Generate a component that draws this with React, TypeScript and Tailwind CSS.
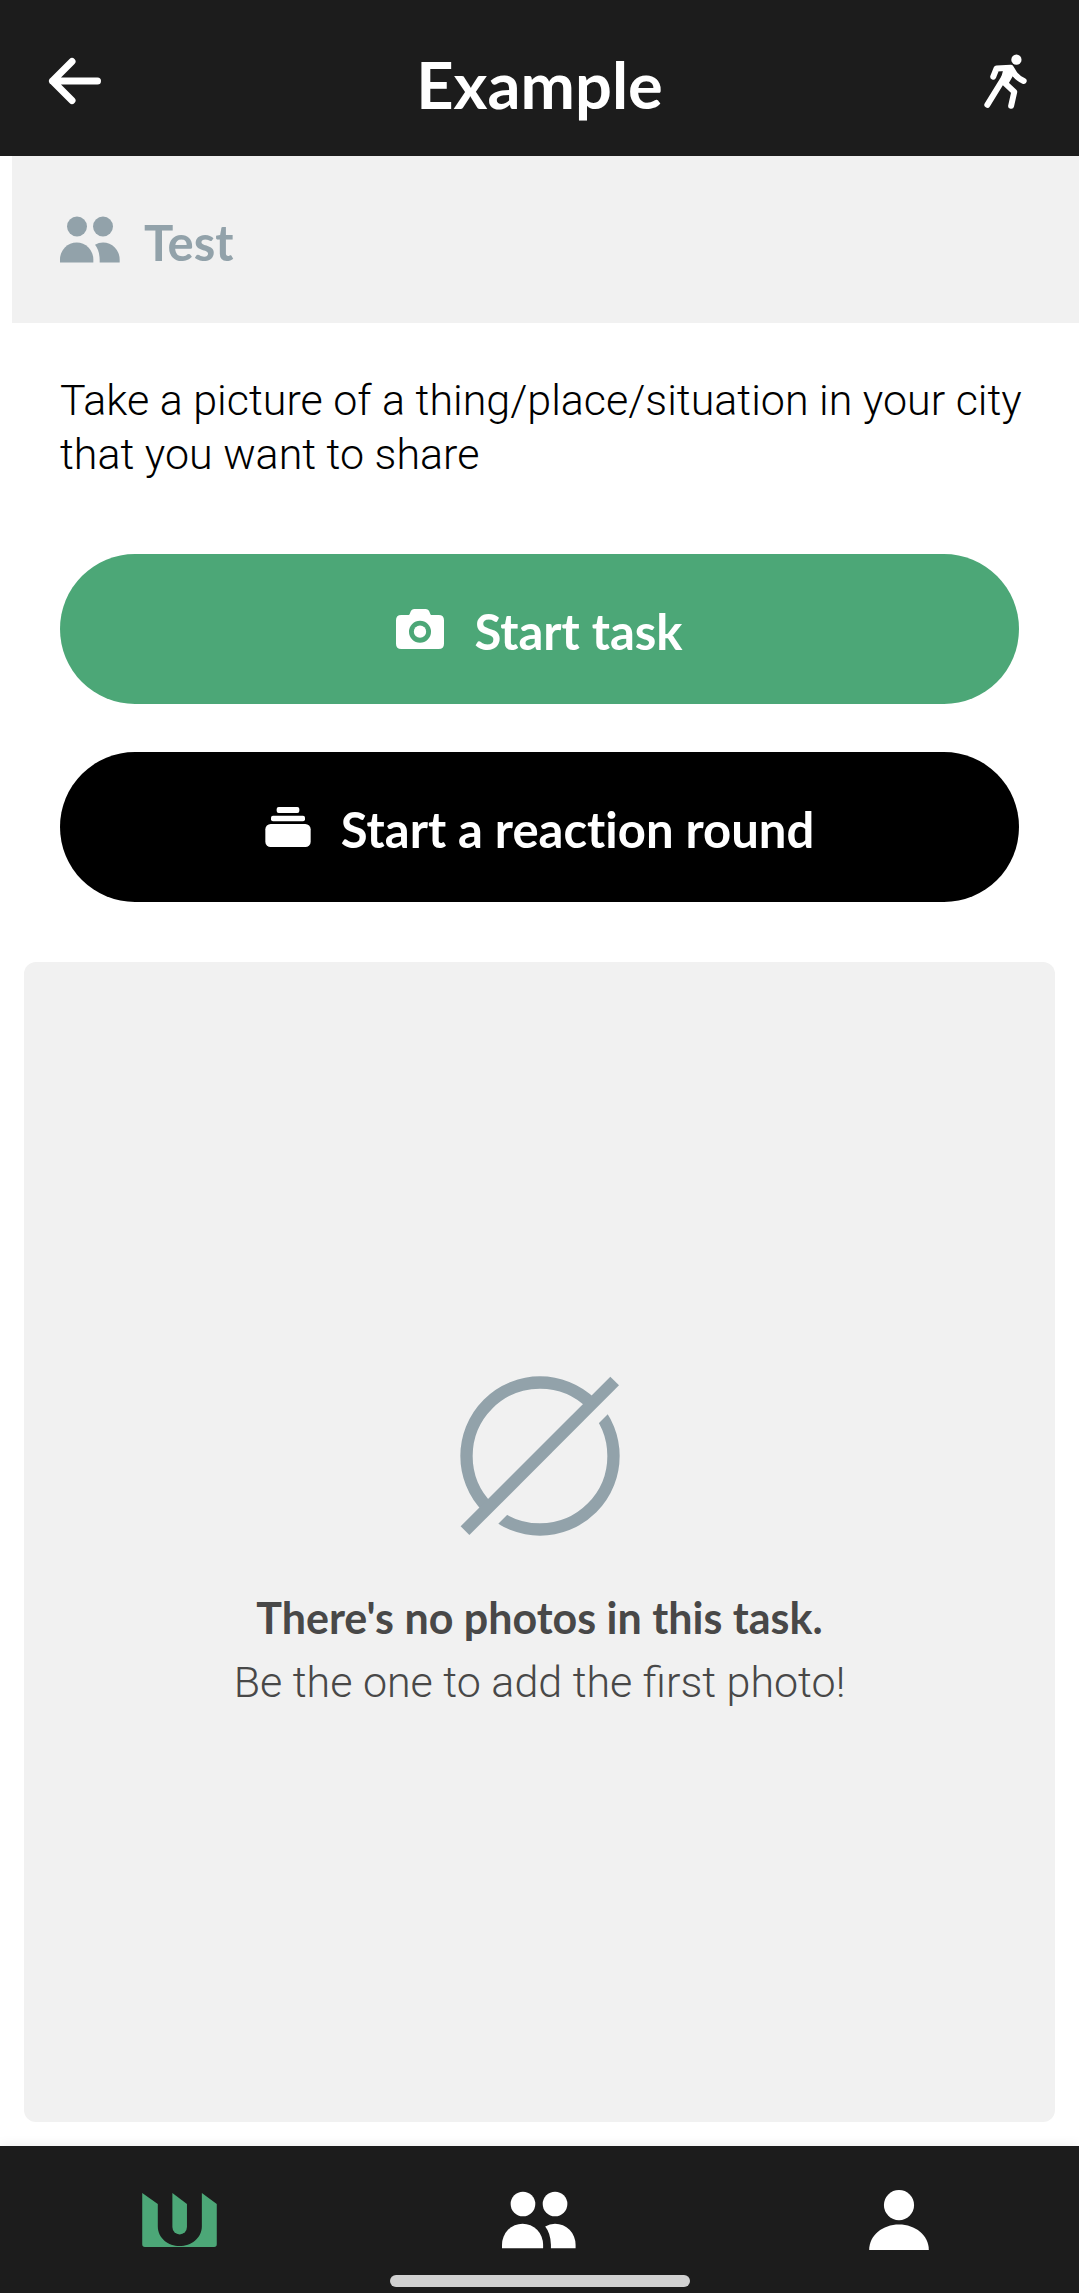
type IconProps = { className?: string };

function BackIcon() {
  return (
    <svg viewBox="0 0 54 48" className="h-12 w-[54px]" fill="none" stroke="currentColor" strokeWidth="7" strokeLinecap="round" strokeLinejoin="round" aria-hidden="true">
      <path d="M49.500 24H4.500M24 4.500L4.500 24l19.500 19.500" />
    </svg>
  );
}

function RunnerIcon() {
  return (
    <svg viewBox="130 100 130 165" className="h-[55px] w-[43px]" fill="none" stroke="currentColor" strokeWidth="18" strokeLinecap="round" strokeLinejoin="round" aria-hidden="true">
      <circle cx="228" cy="116.500" r="15.500" fill="currentColor" stroke="none" />
      <path d="M158 168L168 143L211 141L224 162Q233 173 250 181" />
      <path d="M140 253L196 162" />
      <path d="M194 188L221.500 214L212 256" />
      <path d="M190 142H212L216 158L200 186L184 182L192 152Z" fill="currentColor" strokeWidth="10" />
    </svg>
  );
}

function PeopleIcon({ className }: IconProps) {
  return (
    <svg viewBox="180 650 180 140" className={className} fill="currentColor" aria-hidden="true">
      <circle cx="231" cy="681" r="30" />
      <circle cx="309" cy="681" r="30" />
      <path d="M180 789v-9a50 51 0 0 1 100 0v9z" />
      <path d="M285 736Q296 729 309 729A50 51 0 0 1 359 780V789H299V780Q298 752 285 736z" />
    </svg>
  );
}

function PersonIcon() {
  return (
    <svg viewBox="150 269 180 181" className="h-[60px] w-[60px]" fill="currentColor" aria-hidden="true">
      <circle cx="240" cy="314.500" r="45.500" />
      <path d="M150 450C150 405 191 373 240 373S330 405 330 450Z" />
    </svg>
  );
}

function CameraIcon() {
  return (
    <svg viewBox="48 57 144 120" className="h-10 w-12" fill="currentColor" aria-hidden="true">
      <path fillRule="evenodd" d="M64 75H86Q89 75 90 70Q93 57 104 57H136Q147 57 150 70Q151 75 154 75H176Q192 75 192 91V161Q192 177 176 177H64Q48 177 48 161V91Q48 75 64 75ZM120 92a33 33 0 1 0 0 66a33 33 0 1 0 0-66Z" />
      <circle cx="120" cy="125" r="18.500" />
    </svg>
  );
}

function StackIcon() {
  return (
    <svg viewBox="52 51 136 120" className="h-10 w-[46px]" fill="currentColor" aria-hidden="true">
      <rect x="86" y="51" width="68" height="18" rx="6" />
      <rect x="69" y="77" width="102" height="17" rx="6" />
      <rect x="52" y="102" width="136" height="69" rx="16" />
    </svg>
  );
}

function EmptyIcon() {
  return (
    <svg viewBox="91 108 480 480" className="size-40 text-[#92a2aa]" fill="none" stroke="currentColor" strokeWidth="37" aria-hidden="true">
      <defs>
        <clipPath id="ring-sides">
          <path d="M0 0H678L0 678ZM757 0V757H0Z" />
        </clipPath>
      </defs>
      <circle cx="331" cy="348" r="220.500" clipPath="url(#ring-sides)" />
      <path d="M106 572L555 123" />
    </svg>
  );
}

function BrandIcon() {
  return (
    <svg viewBox="129 158 225 163" className="h-[54px] w-[75px] text-[#4ca777]" fill="currentColor" aria-hidden="true">
      <path d="M129 158L176 191V258C176 294 208 318 242 318S309 294 309 258V158L354 191V313Q354 321 346 321H137Q129 321 129 313Z" />
      <path d="M220 158L264 191V261a22 22 0 0 1-44 0Z" />
    </svg>
  );
}

export default function App() {
  return (
    <div className="flex min-h-screen flex-col bg-white font-['Lato',sans-serif] text-black">
      <header className="grid h-[156px] shrink-0 grid-cols-[1fr_auto_1fr] items-center bg-[#1c1c1c] px-12 text-white">
        <button type="button" aria-label="Back" className="mt-1.5 justify-self-start">
          <BackIcon />
        </button>
        <h1 className="pt-3 text-[65px] leading-20 font-bold">Example</h1>
        <button type="button" aria-label="Start activity" className="mt-1.5 mr-1 justify-self-end">
          <RunnerIcon />
        </button>
      </header>

      <main className="flex flex-1 flex-col">
        <section className="ml-3 flex h-[167px] items-center gap-6 bg-[#f1f1f1] px-12 text-[#92a2aa]">
          <PeopleIcon className="h-[47px] w-[60px]" />
          <h2 className="pt-1 text-[49px] leading-15 font-bold">Test</h2>
        </section>

        <p className="pt-[50px] pr-12 pl-[60px] font-['Roboto',sans-serif] text-[43px] leading-[54px] font-light">
          Take a picture of a thing/place/situation in your city that you want to share
        </p>

        <div className="mt-[73px] flex flex-col gap-12 px-[60px] text-[49px] leading-15 font-bold text-white [font-variant-ligatures:none]">
          <button type="button" className="flex h-[150px] items-center justify-center gap-[30px] rounded-full bg-[#4ca777]">
            <CameraIcon />
            <span className="pt-1">Start task</span>
          </button>
          <button type="button" className="flex h-[150px] items-center justify-center gap-[30px] rounded-full bg-black">
            <StackIcon />
            <span className="pt-1">Start a reaction round</span>
          </button>
        </div>

        <section className="mx-6 mt-[60px] mb-6 flex flex-1 flex-col items-center justify-center rounded-xl bg-[#f1f1f1] pt-1.5 text-center text-[43px] leading-16 text-[#484848]">
          <EmptyIcon />
          <p className="mt-[50px] font-bold">There's no photos in this task.</p>
          <p className="font-['Roboto',sans-serif] font-light">Be the one to add the first photo!</p>
        </section>
      </main>

      <nav className="relative grid h-[147px] shrink-0 grid-cols-3 bg-[#1c1c1c] text-white shadow-[0_0_12px_rgba(0,0,0,0.08)]">
        <a href="#home" aria-label="Home" className="flex items-center justify-center">
          <BrandIcon />
        </a>
        <a href="#groups" aria-label="Groups" className="flex items-center justify-center">
          <PeopleIcon className="h-[58px] w-[74px]" />
        </a>
        <a href="#profile" aria-label="Profile" className="flex items-center justify-center">
          <PersonIcon />
        </a>
        <div className="absolute inset-x-0 bottom-1.5 mx-auto h-3 w-[300px] rounded-full bg-[#d1d1d1]" />
      </nav>
    </div>
  );
}
